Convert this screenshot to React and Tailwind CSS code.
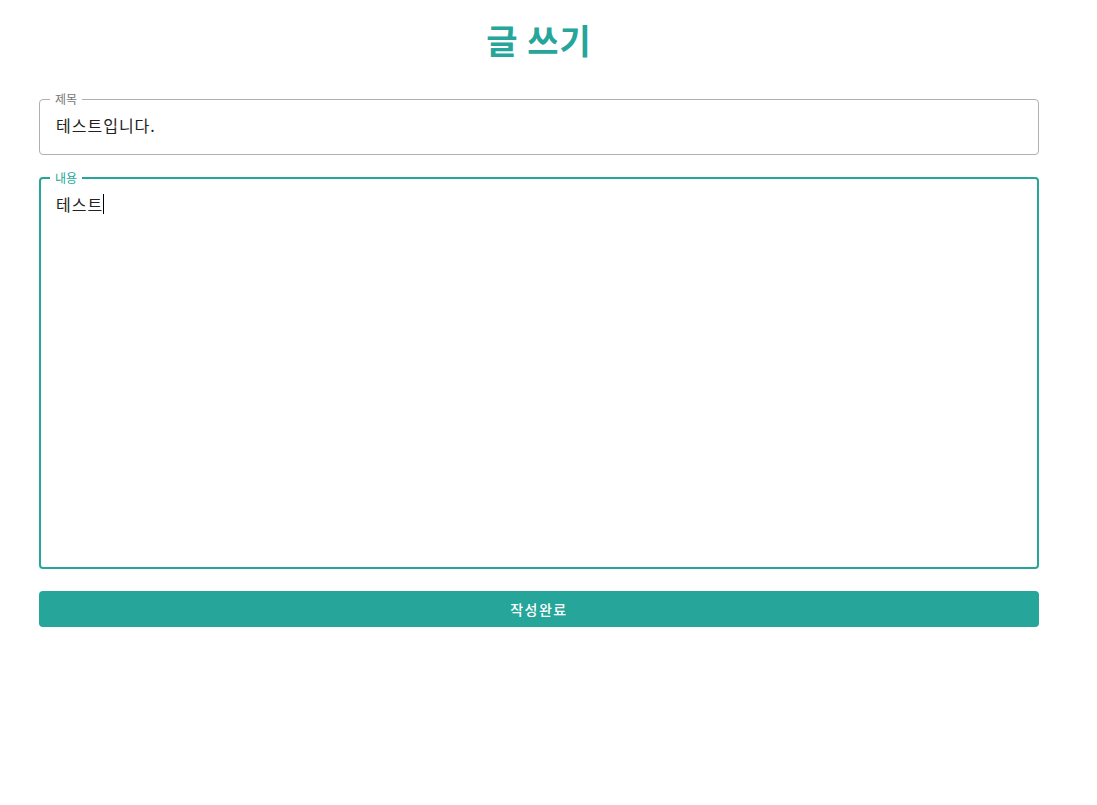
export default function App() {
  return (
    <div className="min-h-[805px] bg-white" style={{ fontFamily: '"Noto Sans CJK KR", "Noto Sans", sans-serif' }}>
      <div className="w-[1000px] ml-[39px] pt-[17px]">
        <h1 className="text-center text-[34px] leading-[46px] font-bold tracking-[1px] text-[#26a69a]">글 쓰기</h1>

        <fieldset className="mt-[29px] border border-[#b0b0b0] rounded-[4px] px-[10px] pb-[17px] pt-[7px]">
          <legend className="px-[5px] text-[12px] leading-[14px] text-[#777]">제목</legend>
          <div className="pl-[6px] text-[16px] leading-[24px] tracking-[1px] text-[#222]">테스트입니다.</div>
        </fieldset>

        <fieldset className="mt-[16px] h-[398px] border-2 border-[#26a69a] rounded-[4px] px-[9px] pt-[7px]">
          <legend className="px-[5px] text-[12px] leading-[14px] text-[#26a69a]">내용</legend>
          <div className="pl-[6px] text-[16px] leading-[24px] tracking-[1px] text-[#222] flex items-center">
            테스트<span className="inline-block w-px h-[20px] bg-black" />
          </div>
        </fieldset>

        <button className="mt-[22px] w-full h-[36px] rounded-[4px] bg-[#26a69a] text-white text-[14px] font-medium tracking-[1.5px]">
          작성완료
        </button>
      </div>
    </div>
  );
}
